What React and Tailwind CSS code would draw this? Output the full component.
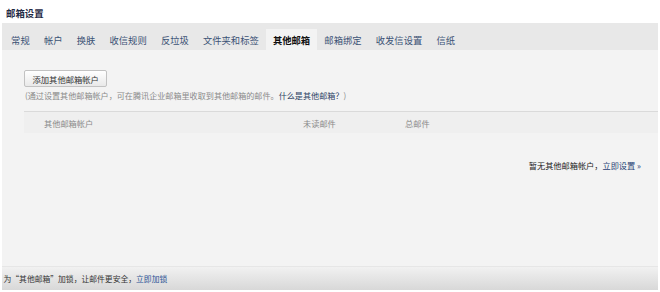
import React from 'react';

const tabs = ['常规', '帐户', '换肤', '收信规则', '反垃圾', '文件夹和标签', '其他邮箱', '邮箱绑定', '收发信设置', '信纸'];

const App = () => {
  return (
    <div className="w-[660px] h-[292px] bg-white p-[2px] flex flex-col font-['Noto_Sans_CJK_SC',sans-serif]">
      {/* Title */}
      <div className="h-[21px] pl-[4px] flex items-center pt-[1px]">
        <span className="text-[9.4px] leading-[12px] font-bold text-[#1f2a44]">邮箱设置</span>
      </div>

      {/* Tabs */}
      <div className="h-[27px] bg-[#e8e8e8] flex items-end pl-[2px]">
        {tabs.map((t) => (
          <div
            key={t}
            className={
              t === '其他邮箱'
                ? 'h-[21px] px-[7.1px] flex items-center bg-[#f3f3f3] text-[9.3px] leading-[12px] font-bold text-[#111]'
                : 'h-[21px] px-[7.1px] flex items-center text-[9.3px] leading-[12px] text-[#3b5275]'
            }
          >
            {t}
          </div>
        ))}
      </div>

      {/* Body */}
      <div className="flex-1 bg-[#f3f3f3] pt-[20px] flex flex-col">
        <div className="pl-[22px] flex flex-col items-start">
          <button className="block h-[17px] px-[7.5px] text-[8.3px] leading-[12px] text-[#333] border border-[#c2c2c2] rounded-[2px] bg-gradient-to-b from-white to-[#e9e9e9]">
            添加其他邮箱帐户
          </button>
          <p className="mt-[3px] pl-[1px] text-[8.1px] leading-[12px] text-[#8a8a8a]">
            (通过设置其他邮箱帐户，可在腾讯企业邮箱里收取到其他邮箱的邮件。<span className="text-[#2b3f63]">什么是其他邮箱？</span>)
          </p>
        </div>

        {/* Table header */}
        <div className="ml-[22px] mt-[9px] h-[22px] border-t border-[#dadada] bg-[#efefef] flex items-center pl-[20px] text-[8.2px] leading-[12px] text-[#8a8a8a]">
          <span className="w-[259px]">其他邮箱帐户</span>
          <span className="w-[102px]">未读邮件</span>
          <span>总邮件</span>
        </div>

        <div className="mt-[26px] pr-[17px] flex justify-end text-[8.2px] leading-[12px] text-[#222]">
          <span>
            暂无其他邮箱帐户，<span className="text-[#1f3f74]">立即设置 »</span>
          </span>
        </div>
      </div>

      {/* Footer */}
      <div className="h-[24px] border-t border-[#e6e6e6] bg-gradient-to-b from-[#f1f1f1] to-[#d8d8d8] flex items-center pl-[1.5px]">
        <span className="text-[7.8px] leading-[12px] text-[#333]">
          为“其他邮箱”加锁，让邮件更安全，<span className="text-[#2a5394]">立即加锁</span>
        </span>
      </div>
    </div>
  );
};

export default App;
